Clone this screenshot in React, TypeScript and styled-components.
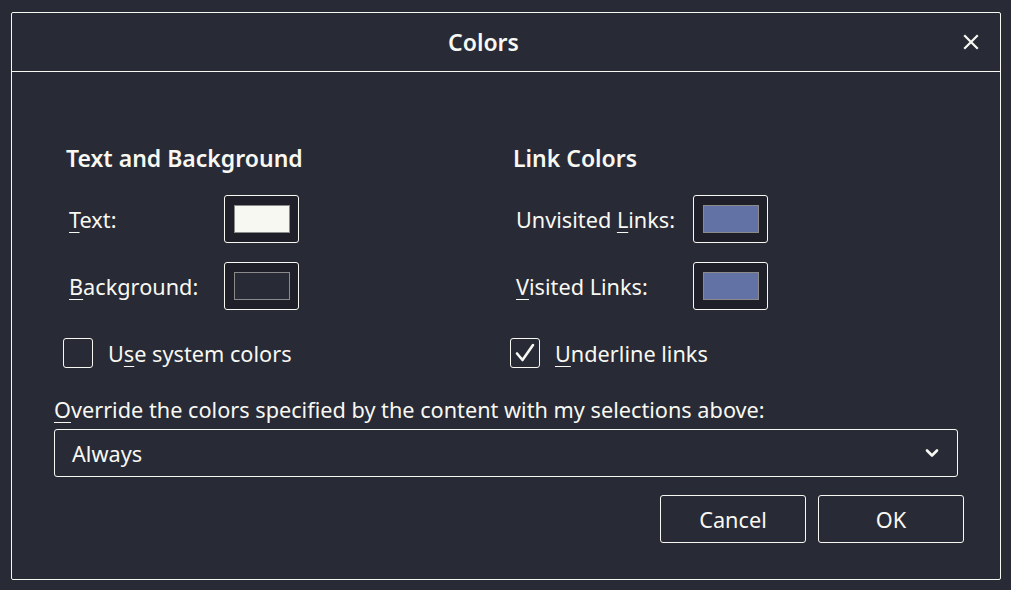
import React from 'react';
import styled, { createGlobalStyle } from 'styled-components';

const GlobalStyle = createGlobalStyle`
  html, body {
    margin: 0;
    padding: 0;
    background: #282a36;
  }
  body {
    font-family: "Noto Sans", "Open Sans", sans-serif;
    color: #f8f8f2;
  }
`;

const Dialog = styled.div`
  box-sizing: border-box;
  width: 990px;
  height: 568px;
  margin: 12px 0 0 11px;
  border: 1px solid #f8f8f2;
  border-radius: 2px;
  display: flex;
  flex-direction: column;
`;

const Header = styled.header`
  height: 58px;
  border-bottom: 1px solid #f8f8f2;
  display: flex;
  align-items: center;
`;

const Title = styled.h1`
  flex: 1;
  margin: 0;
  padding-left: 7px;
  text-align: center;
  font-size: 23px;
  font-weight: 600;
`;

const CloseButton = styled.button`
  width: 46px;
  height: 46px;
  margin-right: 6px;
  border: none;
  background: transparent;
  color: #f8f8f2;
  display: flex;
  align-items: center;
  justify-content: center;
  padding: 0;
`;

const Body = styled.div`
  padding: 72px 42px 0;
  display: flex;
  flex-direction: column;
`;

const Columns = styled.div`
  display: grid;
  grid-template-columns: 447px 1fr;
  padding-left: 9px;
`;

const Section = styled.section`
  display: flex;
  flex-direction: column;
`;

const Heading = styled.h2`
  margin: 0 0 23px;
  padding-left: 3px;
  font-size: 23px;
  line-height: 28px;
  font-weight: 600;
`;

const Rows = styled.div`
  display: flex;
  flex-direction: column;
  gap: 19px;
`;

const Row = styled.div<{ $labelWidth: number }>`
  display: grid;
  grid-template-columns: ${p => p.$labelWidth}px 75px;
  align-items: center;
  padding-left: 6px;
  font-size: 21.7px;
`;

const Mnemonic = styled.span`
  text-decoration: underline;
  text-decoration-thickness: 1px;
  text-underline-offset: 4px;
`;

const SwatchButton = styled.button`
  box-sizing: border-box;
  width: 75px;
  height: 48px;
  padding: 0;
  border: 1px solid #f8f8f2;
  border-radius: 3px;
  background: #1e1f29;
  display: flex;
  align-items: center;
  justify-content: center;
`;

const Swatch = styled.span<{ $color: string }>`
  box-sizing: border-box;
  width: 56px;
  height: 28px;
  border: 1px solid #8a8a8a;
  background: ${p => p.$color};
`;

const CheckRow = styled.label`
  margin-top: 28px;
  display: flex;
  align-items: center;
  gap: 15px;
  font-size: 21.7px;
`;

const CheckBox = styled.span`
  box-sizing: border-box;
  width: 30px;
  height: 30px;
  border: 1px solid #f8f8f2;
  border-radius: 3px;
  display: flex;
  align-items: center;
  justify-content: center;
`;

const OverrideLabel = styled.div`
  margin-top: 29px;
  font-size: 21.7px;
  line-height: 26px;
`;

const Select = styled.div`
  box-sizing: border-box;
  margin-top: 6px;
  height: 48px;
  border: 1px solid #f8f8f2;
  border-radius: 3px;
  padding: 0 18px 0 17px;
  display: flex;
  align-items: center;
  justify-content: space-between;
  font-size: 21.7px;
`;

const Actions = styled.div`
  margin: 18px -6px 0 0;
  display: flex;
  justify-content: flex-end;
  gap: 12px;
`;

const Button = styled.button`
  box-sizing: border-box;
  width: 146px;
  height: 48px;
  border: 1px solid #f8f8f2;
  border-radius: 3px;
  background: transparent;
  color: #f8f8f2;
  font-family: inherit;
  font-size: 21.7px;
`;

type ColorRow = { pre: string; key: string; post: string; color: string };

const textRows: ColorRow[] = [
  { pre: '', key: 'T', post: 'ext:', color: '#f8f8f2' },
  { pre: '', key: 'B', post: 'ackground:', color: '#282a36' },
];

const linkRows: ColorRow[] = [
  { pre: 'Unvisited ', key: 'L', post: 'inks:', color: '#6272a4' },
  { pre: '', key: 'V', post: 'isited Links:', color: '#6272a4' },
];

function ColorSection({ title, rows, labelWidth, check }: {
  title: string;
  rows: ColorRow[];
  labelWidth: number;
  check: { pre: string; key: string; post: string; checked: boolean };
}) {
  return (
    <Section>
      <Heading>{title}</Heading>
      <Rows>
        {rows.map(r => (
          <Row key={r.post} $labelWidth={labelWidth}>
            <span>{r.pre}<Mnemonic>{r.key}</Mnemonic>{r.post}</span>
            <SwatchButton><Swatch $color={r.color} /></SwatchButton>
          </Row>
        ))}
      </Rows>
      <CheckRow>
        <CheckBox>
          {check.checked && (
            <svg width="22" height="22" viewBox="0 0 22 22">
              <polyline points="3,11.5 8.5,18 19,3" fill="none" stroke="#f8f8f2" strokeWidth="2.6" strokeLinecap="round" strokeLinejoin="round" />
            </svg>
          )}
        </CheckBox>
        <span>{check.pre}<Mnemonic>{check.key}</Mnemonic>{check.post}</span>
      </CheckRow>
    </Section>
  );
}

export default function App() {
  return (
    <>
      <GlobalStyle />
      <Dialog>
        <Header>
          <Title>Colors</Title>
          <CloseButton aria-label="Close">
            <svg width="16" height="16" viewBox="0 0 16 16">
              <path d="M2 2 L14 14 M14 2 L2 14" stroke="#f8f8f2" strokeWidth="2.2" strokeLinecap="square" />
            </svg>
          </CloseButton>
        </Header>
        <Body>
          <Columns>
            <ColorSection
              title="Text and Background"
              rows={textRows}
              labelWidth={155}
              check={{ pre: 'U', key: 's', post: 'e system colors', checked: false }}
            />
            <ColorSection
              title="Link Colors"
              rows={linkRows}
              labelWidth={177}
              check={{ pre: '', key: 'U', post: 'nderline links', checked: true }}
            />
          </Columns>
          <OverrideLabel>
            <Mnemonic>O</Mnemonic>verride the colors specified by the content with my selections above:
          </OverrideLabel>
          <Select>
            <span>Always</span>
            <svg width="14" height="10" viewBox="0 0 14 10">
              <polyline points="2,2.5 7,7.5 12,2.5" fill="none" stroke="#f8f8f2" strokeWidth="2.6" strokeLinecap="round" strokeLinejoin="round" />
            </svg>
          </Select>
          <Actions>
            <Button>Cancel</Button>
            <Button>OK</Button>
          </Actions>
        </Body>
      </Dialog>
    </>
  );
}
